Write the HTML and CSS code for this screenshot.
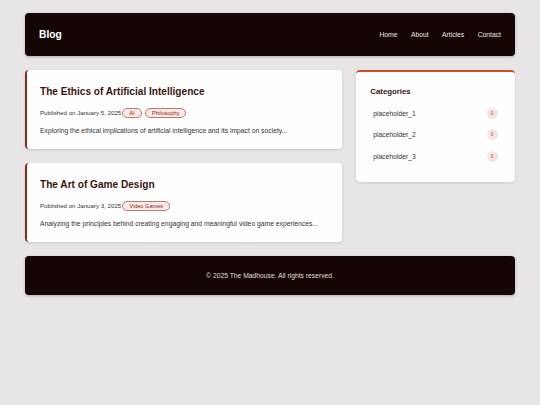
FILE: index.html
```html
<!DOCTYPE html>
<html lang="en">
<head>
<meta charset="utf-8">
<title>Blog</title>
<link rel="stylesheet" href="styles.css">
</head>
<body>
<div class="page">
  <header class="site-header">
    <div class="brand">Blog</div>
    <nav class="nav">
      <a class="nav-link" href="#">Home</a>
      <a class="nav-link" href="#">About</a>
      <a class="nav-link" href="#">Articles</a>
      <a class="nav-link" href="#">Contact</a>
    </nav>
  </header>
  <main class="layout">
    <section class="posts">
      <article class="post">
        <h2 class="post-title">The Ethics of Artificial Intelligence</h2>
        <div class="post-meta">
          <span class="date">Published on January 5, 2025</span>
          <span class="tag">AI</span>
          <span class="tag">Philosophy</span>
        </div>
        <p class="post-desc">Exploring the ethical implications of artificial intelligence and its impact on society...</p>
      </article>
      <article class="post">
        <h2 class="post-title">The Art of Game Design</h2>
        <div class="post-meta">
          <span class="date">Published on January 3, 2025</span>
          <span class="tag">Video Games</span>
        </div>
        <p class="post-desc">Analyzing the principles behind creating engaging and meaningful video game experiences...</p>
      </article>
    </section>
    <aside class="sidebar">
      <h3 class="side-title">Categories</h3>
      <ul class="cat-list">
        <li class="cat"><span>placeholder_1</span><span class="count">0</span></li>
        <li class="cat"><span>placeholder_2</span><span class="count">0</span></li>
        <li class="cat"><span>placeholder_3</span><span class="count">0</span></li>
      </ul>
    </aside>
  </main>
  <footer class="site-footer">© 2025 The Madhouse. All rights reserved.</footer>
</div>
</body>
</html>
```
FILE: styles.css
```css
* { box-sizing: border-box; }
html, body { margin: 0; padding: 0; }
body {
  background: #e7e5e5;
  font-family: "Liberation Sans", Arial, sans-serif;
  color: #333;
}
.page {
  padding: 13px 25px;
  display: flex;
  flex-direction: column;
  gap: 14px;
}
.site-header {
  height: 43px;
  background: #140604;
  border-radius: 4px;
  box-shadow: 0 1px 3px rgba(0,0,0,0.25);
  display: flex;
  align-items: center;
  justify-content: space-between;
  padding: 0 14px;
}
.brand {
  color: #fff;
  font-weight: bold;
  font-size: 10.3px;
}
.nav {
  display: flex;
  gap: 13.5px;
}
.nav-link,
.nav-link:visited {
  color: #ece4e3;
  text-decoration: none;
  font-size: 6.75px;
}
.layout {
  display: grid;
  grid-template-columns: 2fr 1fr;
  gap: 14px;
  align-items: start;
}
.posts {
  display: flex;
  flex-direction: column;
  gap: 14px;
}
.post {
  background: #fefefe;
  border-left: 2px solid #8a2a20;
  border-radius: 4px;
  box-shadow: 0 1px 3px rgba(0,0,0,0.12);
  padding: 14.5px 13px 14px 13px;
  height: 79px;
}
.post-title {
  margin: 0 0 10px;
  font-size: 10.1px;
  line-height: 13px;
  color: #3b140f;
  font-weight: bold;
}
.post-meta {
  display: flex;
  align-items: center;
  height: 10.5px;
  font-size: 6.15px;
  color: #333;
  margin-bottom: 8px;
}
.date { margin-right: 1px; }
.tag {
  font-size: 5.6px;
  line-height: 8.5px;
  padding: 0 6px;
  border: 1px solid #c7766c;
  background: #f9e9e7;
  color: #8a2a20;
  border-radius: 6px;
  margin-right: 3.5px;
}
.post-desc {
  margin: 0;
  font-size: 6.77px;
  line-height: 10px;
  color: #333;
}
.sidebar {
  background: #fefefe;
  border-top: 2px solid #c4502c;
  border-radius: 4px;
  box-shadow: 0 1px 3px rgba(0,0,0,0.12);
  padding: 12.5px 14px 15px;
}
.side-title {
  margin: 0 0 5px;
  font-size: 7.8px;
  line-height: 13px;
  color: #3b140f;
  font-weight: bold;
}
.cat-list {
  list-style: none;
  margin: 0;
  padding: 0;
}
.cat {
  height: 21.5px;
  display: flex;
  align-items: center;
  justify-content: space-between;
  padding: 0 3.5px 0 3px;
  font-size: 6.75px;
  color: #333;
}
.count {
  width: 11px;
  height: 11px;
  border-radius: 50%;
  background: #f6e4e2;
  color: #a8463a;
  font-size: 4.6px;
  display: flex;
  align-items: center;
  justify-content: center;
}
.site-footer {
  height: 39px;
  background: #140604;
  border-radius: 4px;
  box-shadow: 0 1px 3px rgba(0,0,0,0.25);
  color: #e4dcdb;
  font-size: 6.75px;
  display: flex;
  align-items: center;
  justify-content: center;
}
```
